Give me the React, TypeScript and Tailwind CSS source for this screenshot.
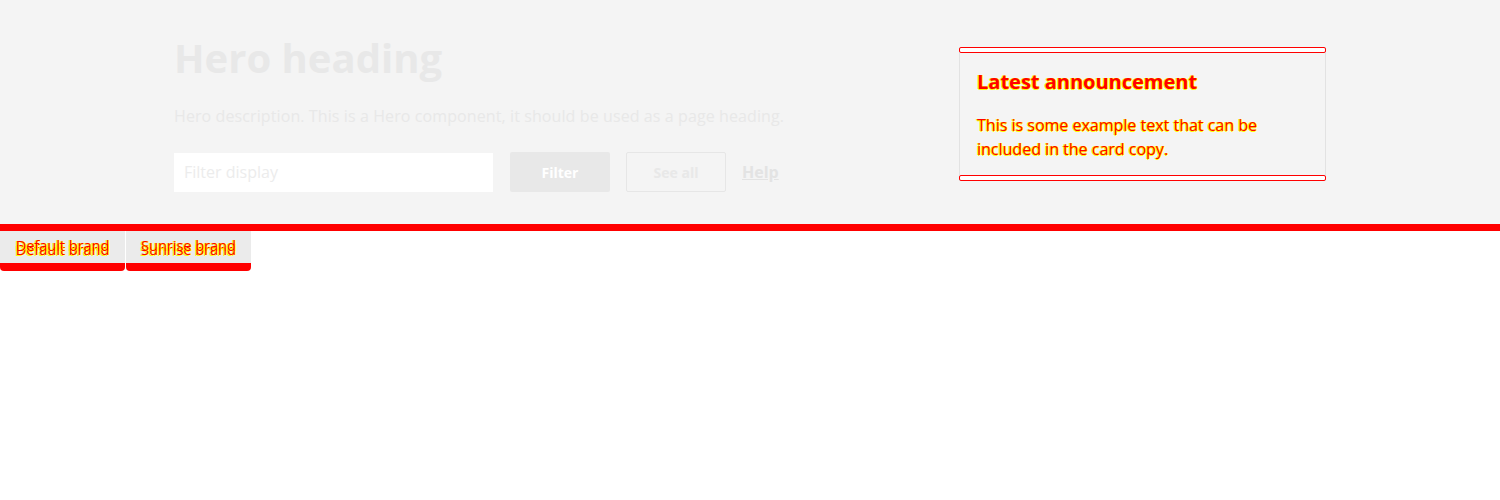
const glitch = '[text-shadow:1px_0_0_#ffff00,-1px_0_0_#ffff00,0_1px_0_#ffff00]';
const doubled = '[text-shadow:1px_0_0_#ffff00,-1px_0_0_#ffff00,0_4px_0_#ff0000,1px_4px_0_#ffff00,-1px_5px_0_#ffff00]';

function Tab({ label }: { label: string }) {
  return (
    <div className="w-[125px] h-[47px] bg-[#ebebeb] rounded-b-[4px] border-t-[7px] border-b-[8px] border-[#ff0000] flex justify-center pt-[6px]">
      <span className={`text-[14.5px] leading-[18px] text-[#ff0000] ${doubled}`}>{label}</span>
    </div>
  );
}

export default function App() {
  return (
    <div className="min-h-[500px] bg-white font-['Open_Sans','Noto_Sans',sans-serif]">
      <section className="bg-[#f4f4f4] h-[224px]">
        <div className="flex justify-between pl-[174px] pr-[174px]">
          <div className="pt-[28px]">
            <h1 className="text-[40px] leading-[60px] font-bold text-[#e8e8e8]">Hero heading</h1>
            <p className="mt-[16px] text-[16px] leading-[24px] tracking-[0.1px] text-[#e8e8e8]">
              Hero description. This is a Hero component, it should be used as a page heading.
            </p>
            <div className="flex items-center mt-[24px]">
              <div className="w-[319px] h-[39px] bg-white flex items-center px-[10px] text-[16px] text-[#ececec]">
                Filter display
              </div>
              <button className="ml-[17px] w-[100px] h-[40px] bg-[#e8e8e8] rounded-[2px] text-[14px] font-bold text-white">
                Filter
              </button>
              <button className="ml-[16px] w-[100px] h-[40px] border border-[#e6e6e6] rounded-[2px] text-[14px] font-bold text-[#e8e8e8]">
                See all
              </button>
              <a className="ml-[16px] text-[16px] font-bold text-[#e3e3e3] underline">Help</a>
            </div>
          </div>
          <div className="mt-[47px] w-[367px] h-[134px] flex flex-col border-x border-[#e2e2e2]">
            <div className="h-[6px] border border-[#ff0000] bg-white rounded-[2px] -mx-px" />
            <div className="flex-1 px-[17px] pt-[16px]">
              <h2 className={`text-[20px] leading-[26px] font-bold text-[#ff0000] ${glitch}`}>Latest announcement</h2>
              <p className={`mt-[18px] text-[16px] leading-[24px] text-[#ff0000] ${glitch}`}>
                This is some example text that can be included in the card copy.
              </p>
            </div>
            <div className="h-[6px] border border-[#ff0000] bg-white rounded-[2px] -mx-px" />
          </div>
        </div>
      </section>
      <div className="relative">
        <div className="absolute left-0 right-0 top-0 h-[7px] bg-[#ff0000]" />
        <div className="relative flex gap-px">
          <Tab label="Default brand" />
          <Tab label="Sunrise brand" />
        </div>
      </div>
    </div>
  );
}
